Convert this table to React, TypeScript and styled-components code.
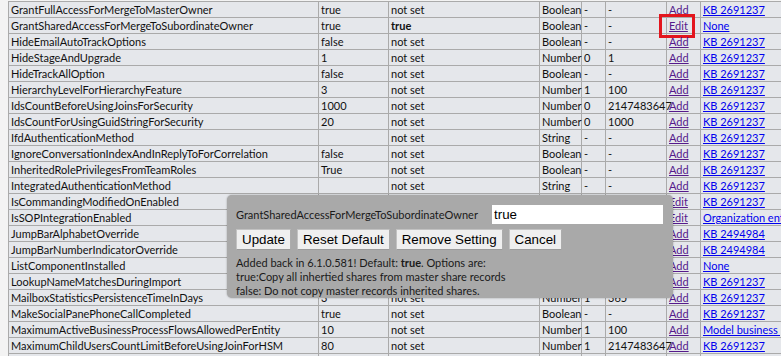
import React from 'react';
import styled, { createGlobalStyle } from 'styled-components';

const GlobalStyle = createGlobalStyle`
  html, body {
    margin: 0;
    padding: 0;
    overflow: hidden;
    background: #f3f3f3;
  }
  body {
    font-family: Lato, "Liberation Sans", sans-serif;
    font-size: 11px;
    color: #111;
  }
`;

const Page = styled.div`
  position: relative;
  padding: 1px 0 0 8px;
  width: 1000px;
`;

const Table = styled.table`
  border-collapse: collapse;
  table-layout: fixed;
  width: 892px;
  background: #e5e7eb;
  border: 1px solid #aaa;
`;

const Cell = styled.td<{ $bold?: boolean }>`
  position: relative;
  height: 15px;
  padding: 0 1px 0 2px;
  line-height: 15px;
  border: 1px solid #aaa;
  white-space: nowrap;
  overflow: visible;
  font-weight: ${(p) => (p.$bold ? 700 : 400)};
`;

const Link = styled.a<{ $visited?: boolean }>`
  color: ${(p) => (p.$visited ? '#551a8b' : '#0000ee')};
  text-decoration: underline;
  cursor: pointer;
`;

const Highlight = styled.span`
  position: absolute;
  left: -8px;
  top: -4px;
  width: 36px;
  height: 24px;
  box-sizing: border-box;
  border: 3px solid #e3151d;
  pointer-events: none;
`;

const Dialog = styled.div`
  position: absolute;
  left: 227px;
  top: 195px;
  width: 446px;
  height: 103px;
  box-sizing: border-box;
  padding: 10px 10px 0 9px;
  background: #a9a9a9;
  border-radius: 5px;
  box-shadow: 0 0 2px rgba(0, 0, 0, 0.35);
`;

const FieldRow = styled.div`
  display: flex;
  align-items: center;
  justify-content: space-between;
  height: 19px;
`;

const FieldLabel = styled.label`
  color: #1a1a1a;
`;

const ValueInput = styled.input`
  width: 171px;
  height: 19px;
  box-sizing: border-box;
  margin: 0;
  padding: 0 2px;
  border: none;
  outline: none;
  background: #fff;
  font: 13.33px "Liberation Sans", Arial, sans-serif;
  color: #000;
`;

const ButtonBar = styled.div`
  display: flex;
  gap: 6px;
  margin-top: 5px;
`;

const Button = styled.button`
  height: 21px;
  margin: 0;
  padding: 0 5px;
  background: #efefef;
  border: 1px solid #c2c2c2;
  border-bottom-color: #9c9c9c;
  border-right-color: #acacac;
  border-radius: 1px;
  font: 13.33px "Liberation Sans", Arial, sans-serif;
  color: #000;
`;

const Notes = styled.div`
  margin-top: 6px;
  line-height: 14px;
  color: #1a1a1a;
`;

type Row = {
  name: string;
  value: string;
  current: string;
  type: string;
  min: string;
  max: string;
  action: 'Add' | 'Edit' | '';
  link: string;
};

const kb = 'KB 2691237';

const rows: Row[] = [
  { name: 'GrantFullAccessForMergeToMasterOwner', value: 'true', current: 'not set', type: 'Boolean', min: '-', max: '-', action: 'Add', link: kb },
  { name: 'GrantSharedAccessForMergeToSubordinateOwner', value: 'true', current: 'true', type: 'Boolean', min: '-', max: '-', action: 'Edit', link: 'None' },
  { name: 'HideEmailAutoTrackOptions', value: 'false', current: 'not set', type: 'Boolean', min: '-', max: '-', action: 'Add', link: kb },
  { name: 'HideStageAndUpgrade', value: '1', current: 'not set', type: 'Number', min: '0', max: '1', action: 'Add', link: kb },
  { name: 'HideTrackAllOption', value: 'false', current: 'not set', type: 'Boolean', min: '-', max: '-', action: 'Add', link: kb },
  { name: 'HierarchyLevelForHierarchyFeature', value: '3', current: 'not set', type: 'Number', min: '1', max: '100', action: 'Add', link: kb },
  { name: 'IdsCountBeforeUsingJoinsForSecurity', value: '1000', current: 'not set', type: 'Number', min: '0', max: '2147483647', action: 'Add', link: kb },
  { name: 'IdsCountForUsingGuidStringForSecurity', value: '20', current: 'not set', type: 'Number', min: '0', max: '1000', action: 'Add', link: kb },
  { name: 'IfdAuthenticationMethod', value: '', current: 'not set', type: 'String', min: '-', max: '-', action: 'Add', link: kb },
  { name: 'IgnoreConversationIndexAndInReplyToForCorrelation', value: 'false', current: 'not set', type: 'Boolean', min: '-', max: '-', action: 'Add', link: kb },
  { name: 'InheritedRolePrivilegesFromTeamRoles', value: 'True', current: 'not set', type: 'Boolean', min: '-', max: '-', action: 'Add', link: kb },
  { name: 'IntegratedAuthenticationMethod', value: '', current: 'not set', type: 'String', min: '-', max: '-', action: 'Add', link: kb },
  { name: 'IsCommandingModifiedOnEnabled', value: '', current: 'true', type: 'Boolean', min: '-', max: '-', action: 'Edit', link: kb },
  { name: 'IsSOPIntegrationEnabled', value: 'false', current: 'true', type: 'Boolean', min: '-', max: '-', action: 'Edit', link: 'Organization entity setting' },
  { name: 'JumpBarAlphabetOverride', value: '', current: 'not set', type: 'String', min: '-', max: '-', action: 'Add', link: 'KB 2494984' },
  { name: 'JumpBarNumberIndicatorOverride', value: '', current: 'not set', type: 'String', min: '-', max: '-', action: 'Add', link: 'KB 2494984' },
  { name: 'ListComponentInstalled', value: 'false', current: 'not set', type: 'Boolean', min: '-', max: '-', action: 'Add', link: 'None' },
  { name: 'LookupNameMatchesDuringImport', value: 'false', current: 'not set', type: 'Boolean', min: '-', max: '-', action: 'Add', link: kb },
  { name: 'MailboxStatisticsPersistenceTimeInDays', value: '3', current: 'not set', type: 'Number', min: '1', max: '365', action: 'Add', link: kb },
  { name: 'MakeSocialPanePhoneCallCompleted', value: 'true', current: 'not set', type: 'Boolean', min: '-', max: '-', action: 'Add', link: kb },
  { name: 'MaximumActiveBusinessProcessFlowsAllowedPerEntity', value: '10', current: 'not set', type: 'Number', min: '1', max: '100', action: 'Add', link: 'Model business process flows' },
  { name: 'MaximumChildUsersCountLimitBeforeUsingJoinForHSM', value: '80', current: 'not set', type: 'Number', min: '1', max: '2147483647', action: 'Add', link: kb },
  // next row starts just below the visible frame, only its top edge shows
  { name: '', value: '', current: '', type: '', min: '', max: '', action: '', link: '' },
];

const widths = [310, 70, 151, 42, 24, 61, 34, 200];

const App = () => {
  return (
    <>
      <GlobalStyle />
      <Page>
        <Table>
          <colgroup>
            {widths.map((w, i) => (
              <col key={i} style={{ width: w }} />
            ))}
          </colgroup>
          <tbody>
            {rows.map((r, i) => (
              <tr key={i}>
                <Cell>{r.name}</Cell>
                <Cell>{r.value}</Cell>
                <Cell $bold={r.action === 'Edit'}>{r.current}</Cell>
                <Cell>{r.type}</Cell>
                <Cell>{r.min}</Cell>
                <Cell>{r.max}</Cell>
                <Cell>
                  {r.action && <Link $visited>{r.action}</Link>}
                  {i === 1 && <Highlight />}
                </Cell>
                <Cell>{r.link && <Link>{r.link}</Link>}</Cell>
              </tr>
            ))}
          </tbody>
        </Table>

        <Dialog>
          <FieldRow>
            <FieldLabel>GrantSharedAccessForMergeToSubordinateOwner</FieldLabel>
            <ValueInput defaultValue="true" />
          </FieldRow>
          <ButtonBar>
            <Button>Update</Button>
            <Button>Reset Default</Button>
            <Button>Remove Setting</Button>
            <Button>Cancel</Button>
          </ButtonBar>
          <Notes>
            Added back in 6.1.0.581! Default: <b>true</b>. Options are:
            <br />
            true:Copy all inhertied shares from master share records
            <br />
            false: Do not copy master records inherited shares.
          </Notes>
        </Dialog>
      </Page>
    </>
  );
};

export default App;
